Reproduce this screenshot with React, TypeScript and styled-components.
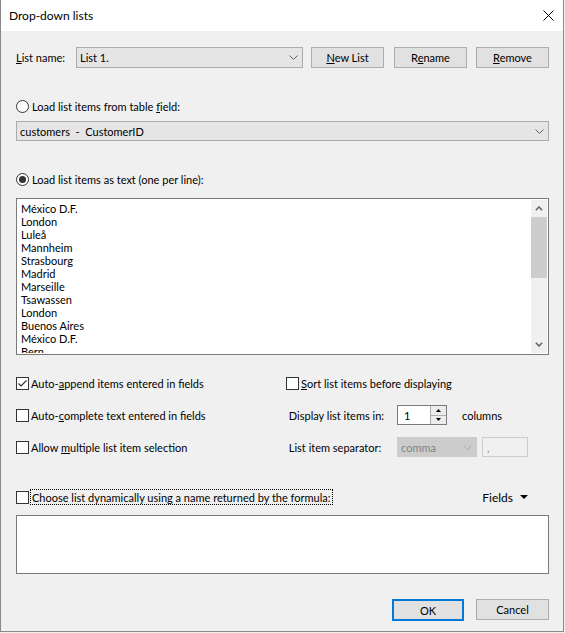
import React from 'react';
import styled, { createGlobalStyle } from 'styled-components';

const Global = createGlobalStyle`
  html, body { margin: 0; padding: 0; background: #f0f0f0; }
  body { font-family: Lato, "Liberation Sans", sans-serif; font-size: 11px; color: #000; }
  * { box-sizing: border-box; }
  svg { display: block; }
`;

const Window = styled.div`
  width: 564px;
  height: 632px;
  border: 1px solid #8a8a8a;
  border-top: none;
  background: #f0f0f0;
  display: flex;
  flex-direction: column;
`;

const TitleBar = styled.div`
  height: 31px;
  background: #fff;
  display: flex;
  align-items: center;
  justify-content: space-between;
  padding: 0 9px 0 8px;
  flex: none;
`;

const Title = styled.span`
  font-size: 12px;
`;

const Body = styled.div`
  flex: 1;
  display: flex;
  flex-direction: column;
  padding: 16px 14px 0 15px;
`;

const Row = styled.div<{ $top?: number; $h?: number }>`
  display: flex;
  align-items: center;
  margin-top: ${(p) => p.$top ?? 0}px;
  height: ${(p) => p.$h ?? 16}px;
  flex: none;
`;

const Label = styled.span<{ $w?: number }>`
  width: ${(p) => (p.$w ? `${p.$w}px` : 'auto')};
  flex: none;
  white-space: pre;
`;

const Combo = styled.div<{ $w?: number; $h?: number; $disabled?: boolean }>`
  width: ${(p) => (p.$w ? `${p.$w}px` : '100%')};
  height: ${(p) => p.$h ?? 21}px;
  flex: none;
  display: flex;
  align-items: center;
  justify-content: space-between;
  padding: 0 4px 0 3px;
  background: ${(p) => (p.$disabled ? '#cccccc' : '#e5e5e5')};
  border: 1px solid ${(p) => (p.$disabled ? '#cccccc' : '#acacac')};
  color: ${(p) => (p.$disabled ? '#838383' : '#000')};
  white-space: pre;
`;

const Button = styled.div<{ $w: number; $ml?: number; $default?: boolean; $h?: number }>`
  width: ${(p) => p.$w}px;
  height: ${(p) => p.$h ?? 21}px;
  margin-left: ${(p) => p.$ml ?? 0}px;
  flex: none;
  display: flex;
  align-items: center;
  justify-content: center;
  background: #e1e1e1;
  border: ${(p) => (p.$default ? '2px solid #0078d7' : '1px solid #adadad')};
`;

const RadioCircle = styled.span<{ $on?: boolean }>`
  width: 13px;
  height: 13px;
  border-radius: 50%;
  border: 1px solid #333;
  background: #fff;
  flex: none;
  display: flex;
  align-items: center;
  justify-content: center;
  &::after {
    content: '';
    width: 7px;
    height: 7px;
    border-radius: 50%;
    background: ${(p) => (p.$on ? '#333' : 'transparent')};
  }
`;

const Box = styled.span`
  width: 13px;
  height: 13px;
  border: 1px solid #333;
  background: #fff;
  flex: none;
  display: flex;
  align-items: center;
  justify-content: center;
`;

const OptionText = styled.span<{ $focus?: boolean; $ml?: number }>`
  margin-left: ${(p) => p.$ml ?? (p.$focus ? 1 : 2)}px;
  padding: ${(p) => (p.$focus ? '0 1px' : '0')};
  border: ${(p) => (p.$focus ? '1px dotted #000' : 'none')};
  height: ${(p) => (p.$focus ? '16px' : 'auto')};
  display: flex;
  align-items: center;
  white-space: pre;
`;

const TextList = styled.div`
  margin-top: 11px;
  height: 157px;
  flex: none;
  background: #fff;
  border: 1px solid #7a7a7a;
  padding: 1px 1px 1px 0;
  display: flex;
`;

const Lines = styled.div`
  flex: 1;
  overflow: hidden;
  padding: 2px 4px;
  line-height: 13px;
`;

const ScrollBar = styled.div`
  width: 16px;
  flex: none;
  background: #f0f0f0;
  display: flex;
  flex-direction: column;
`;

const ScrollArrow = styled.div`
  height: 17px;
  flex: none;
  display: flex;
  align-items: center;
  justify-content: center;
`;

const Thumb = styled.div`
  height: 61px;
  flex: none;
  background: #cdcdcd;
`;

const Spacer = styled.div`
  flex: 1;
`;

const OptionsGrid = styled.div`
  margin-top: 12px;
  display: grid;
  grid-template-columns: 270px 1fr;
  grid-auto-rows: 32px;
  flex: none;
`;

const Cell = styled.div`
  display: flex;
  align-items: center;
`;

const Spin = styled.div`
  width: 50px;
  height: 20px;
  flex: none;
  display: flex;
  border: 1px solid #7a7a7a;
  background: #fff;
`;

const SpinInput = styled.div`
  flex: 1;
  display: flex;
  align-items: center;
  padding-left: 6px;
`;

const SpinButtons = styled.div`
  width: 16px;
  display: flex;
  flex-direction: column;
  border-left: 1px solid #adadad;
`;

const SpinBtn = styled.div`
  flex: 1;
  display: flex;
  align-items: center;
  justify-content: center;
  background: #ececec;
  & + & { border-top: 1px solid #adadad; }
`;

const DisabledBox = styled.div`
  width: 46px;
  height: 20px;
  margin-left: 5px;
  border: 1px solid #cccccc;
  background: #f0f0f0;
  color: #838383;
  padding-left: 4px;
  display: flex;
  align-items: center;
  flex: none;
`;

const Suffix = styled.span`
  margin-left: 15px;
`;

const ChooseRow = styled.div`
  margin-top: 25px;
  height: 18px;
  display: flex;
  align-items: center;
  justify-content: space-between;
  flex: none;
`;

const FieldsButton = styled.div`
  display: flex;
  align-items: center;
  gap: 7px;
  margin-right: 21px;
  font-size: 12px;
`;

const FormulaBox = styled.div`
  margin-top: 9px;
  height: 59px;
  flex: none;
  background: #fff;
  border: 1px solid #7a7a7a;
`;

const ButtonRow = styled.div`
  margin-top: 25px;
  display: flex;
  justify-content: flex-end;
  align-items: flex-start;
  flex: none;
`;

const Chevron = ({ color = '#606060' }: { color?: string }) => (
  <svg width="9" height="5" viewBox="0 0 9 5">
    <polyline points="0.5,0.5 4.5,4.5 8.5,0.5" fill="none" stroke={color} strokeWidth="1" />
  </svg>
);

const ScrollChevron = ({ up }: { up?: boolean }) => (
  <svg width="8" height="5" viewBox="0 0 8 5">
    <polyline
      points={up ? '0.8,4.2 4,1 7.2,4.2' : '0.8,0.8 4,4 7.2,0.8'}
      fill="none"
      stroke="#606060"
      strokeWidth="1.5"
    />
  </svg>
);

const Tri = ({ up, w = 5 }: { up?: boolean; w?: number }) => {
  const h = Math.ceil(w / 2);
  return (
    <svg width={w} height={h} viewBox={`0 0 ${w} ${h}`}>
      <polygon points={up ? `0,${h} ${w},${h} ${w / 2},0` : `0,0 ${w},0 ${w / 2},${h}`} fill="#000" />
    </svg>
  );
};

const Check = () => (
  <svg width="11" height="11" viewBox="0 0 11 11">
    <polyline points="1.5,5.5 4,8 9.5,2.5" fill="none" stroke="#333" strokeWidth="1.2" />
  </svg>
);

const Radio = ({ on, children }: { on?: boolean; children: React.ReactNode }) => (
  <>
    <RadioCircle $on={on} />
    <OptionText $ml={3}>{children}</OptionText>
  </>
);

const CheckOpt = ({ on, focus, children }: { on?: boolean; focus?: boolean; children: React.ReactNode }) => (
  <Cell>
    <Box>{on && <Check />}</Box>
    <OptionText $focus={focus}>{children}</OptionText>
  </Cell>
);

const cities = [
  'México D.F.',
  'London',
  'Luleå',
  'Mannheim',
  'Strasbourg',
  'Madrid',
  'Marseille',
  'Tsawassen',
  'London',
  'Buenos Aires',
  'México D.F.',
  'Bern',
];

export default function App() {
  return (
    <>
      <Global />
      <Window>
        <TitleBar>
          <Title>Drop-down lists</Title>
          <svg width="11" height="11" viewBox="0 0 11 11">
            <path d="M0.5 0.5 L10.5 10.5 M10.5 0.5 L0.5 10.5" stroke="#000" strokeWidth="1" />
          </svg>
        </TitleBar>
        <Body>
          <Row $h={21}>
            <Label $w={60}>
              <u>L</u>ist name:
            </Label>
            <Combo $w={227}>
              <span>List 1.</span>
              <Chevron />
            </Combo>
            <Button $w={73} $ml={8}>
              <span>
                <u>N</u>ew List
              </span>
            </Button>
            <Button $w={73} $ml={10}>
              <span>
                R<u>e</u>name
              </span>
            </Button>
            <Button $w={73} $ml={9}>
              <span>
                <u>R</u>emove
              </span>
            </Button>
          </Row>

          <Row $top={30}>
            <Radio>
              Load list items from table <u>f</u>ield:
            </Radio>
          </Row>
          <Row $top={7} $h={20}>
            <Combo $h={20}>
              <span>{'customers  -  CustomerID'}</span>
              <Chevron />
            </Combo>
          </Row>

          <Row $top={30}>
            <Radio on>Load list items as text (one per line):</Radio>
          </Row>
          <TextList>
            <Lines>
              {cities.map((c, i) => (
                <div key={i}>{c}</div>
              ))}
            </Lines>
            <ScrollBar>
              <ScrollArrow>
                <ScrollChevron up />
              </ScrollArrow>
              <Thumb />
              <Spacer />
              <ScrollArrow>
                <ScrollChevron />
              </ScrollArrow>
            </ScrollBar>
          </TextList>

          <OptionsGrid>
            <CheckOpt on>
              Auto-<u>a</u>ppend items entered in fields
            </CheckOpt>
            <CheckOpt>
              <u>S</u>ort list items before displaying
            </CheckOpt>
            <CheckOpt>
              Auto-<u>c</u>omplete text entered in fields
            </CheckOpt>
            <Cell>
              <Label $w={111}> Display list items in:</Label>
              <Spin>
                <SpinInput>1</SpinInput>
                <SpinButtons>
                  <SpinBtn>
                    <Tri up />
                  </SpinBtn>
                  <SpinBtn>
                    <Tri />
                  </SpinBtn>
                </SpinButtons>
              </Spin>
              <Suffix>columns</Suffix>
            </Cell>
            <CheckOpt>
              Allow <u>m</u>ultiple list item selection
            </CheckOpt>
            <Cell>
              <Label $w={111}> List item separator:</Label>
              <Combo $w={80} $h={20} $disabled>
                <span>comma</span>
                <Chevron color="#a8a8a8" />
              </Combo>
              <DisabledBox>,</DisabledBox>
            </Cell>
          </OptionsGrid>

          <ChooseRow>
            <CheckOpt focus>Choose list dynamically using a name returned by the formula:</CheckOpt>
            <FieldsButton>
              <span>Fields</span>
              <Tri w={8} />
            </FieldsButton>
          </ChooseRow>
          <FormulaBox />

          <ButtonRow>
            <Button $w={72} $h={22} $default>
              OK
            </Button>
            <Button $w={73} $ml={12}>
              Cancel
            </Button>
          </ButtonRow>
        </Body>
      </Window>
    </>
  );
}
